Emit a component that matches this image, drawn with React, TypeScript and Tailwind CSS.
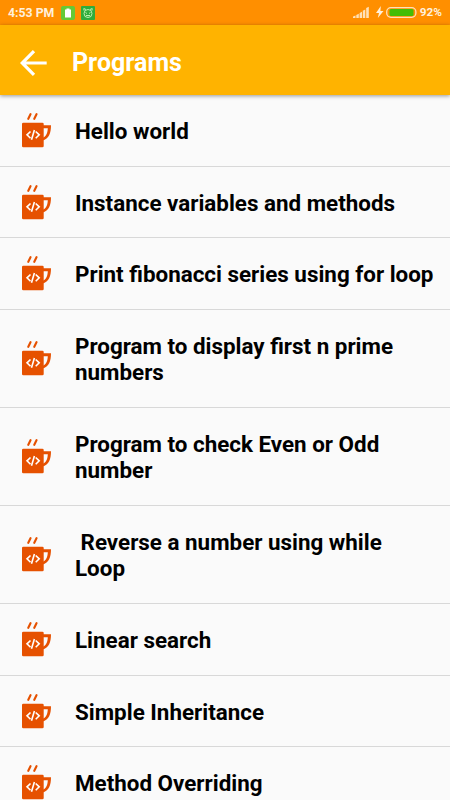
const PROGRAMS: { title: string; tall?: boolean }[] = [
  { title: "Hello world" },
  { title: "Instance variables and methods" },
  { title: "Print fibonacci series using for loop" },
  { title: "Program to display first n prime\nnumbers", tall: true },
  { title: "Program to check Even or Odd\nnumber", tall: true },
  { title: " Reverse a number using while\nLoop", tall: true },
  { title: "Linear search" },
  { title: "Simple Inheritance" },
  { title: "Method Overriding" },
];

export default function App() {
  return (
    <div className="flex h-[800px] w-[450px] flex-col overflow-hidden bg-[#fafafa] font-['Roboto',sans-serif]">
      <StatusBar />
      <header className="z-10 flex h-[70px] shrink-0 items-center bg-[#ffb300] pt-[5px] pl-5 text-white shadow-[0_1px_4px_rgba(0,0,0,0.4)]">
        <button type="button" aria-label="Back">
          <svg width="27" height="26" viewBox="0 0 27 26" fill="none" stroke="currentColor" strokeWidth="3.2">
            <path d="M26.7 13H2.5M14 1.2L2.2 13L14 24.8" />
          </svg>
        </button>
        <h1 className="ml-[25px] text-[25px] leading-none font-bold">Programs</h1>
      </header>
      <ul className="flex flex-col">
        {PROGRAMS.map((p) => (
          <Row key={p.title} title={p.title} tall={p.tall} />
        ))}
      </ul>
    </div>
  );
}

function StatusBar() {
  return (
    <div className="flex h-[25px] shrink-0 items-center bg-[#ff8f00] pr-[8px] pl-[8px] text-[12px] leading-none font-medium text-[#fff0dc]">
      <span className="w-[53px] pt-px text-[12.3px] font-bold whitespace-nowrap">4:53 PM</span>
      <svg width="14" height="14" viewBox="0 0 14 14" className="shrink-0">
        <rect width="14" height="14" rx="2" fill="#65c936" />
        <path d="M4 3.5h1.5V2.5h3v1H10v8H4z" fill="#fff" />
      </svg>
      <svg width="14" height="14" viewBox="0 0 14 14" className="ml-[6px] shrink-0">
        <rect width="14" height="14" rx="1" fill="#2fac3b" />
        <g fill="none" stroke="#b9efad" strokeWidth="1">
          <circle cx="7" cy="7.5" r="4" />
          <path d="M3 4.5L2.8 2.5L5 3.5M11 4.5L11.2 2.5L9 3.5M4.5 6.5L6 7.5M9.5 6.5L8 7.5M5 9.5h4" />
        </g>
      </svg>
      <div className="ml-auto flex items-center">
        <svg width="17" height="12" viewBox="0 0 17 12" fill="#ffe1b8">
          <path d="M0 12V10.5L2.5 9.5V12zM3.3 12V9L5.8 7.8V12zM6.6 12V7L9 5.8V12zM9.8 12V4.8L12.3 3.5V12zM13.2 12V2L15.8 .7V12z" />
        </svg>
        <svg width="8" height="12" viewBox="0 0 8 12" className="ml-[6px]" fill="#fff0dc">
          <path d="M4.8 0L0 7h3L1.8 12L7.5 5H4.4z" />
        </svg>
        <svg width="31" height="11" viewBox="0 0 31 11" className="ml-[2px]">
          <rect x=".7" y=".7" width="29.2" height="9.6" rx="4.2" fill="none" stroke="#ffe1b8" strokeWidth="1.3" />
          <rect x="3.5" y="2" width="24" height="7" rx="1.5" fill="#43bd05" />
        </svg>
        <span className="ml-[3px] pt-px text-[11.8px] font-bold">92%</span>
      </div>
    </div>
  );
}

function Row({ title, tall }: { title: string; tall?: boolean }) {
  return (
    <li
      className={`flex shrink-0 items-center border-b border-[#d8d8d8] pl-[22px] ${
        tall ? "h-[98px]" : "h-[71.7px]"
      }`}
    >
      <CoffeeIcon />
      <span className="ml-[23px] pt-px text-[22.4px] leading-[26px] font-bold whitespace-pre text-black">
        {title}
      </span>
    </li>
  );
}

function CoffeeIcon() {
  return (
    <svg width="30" height="35" viewBox="0 0 30 35" fill="none" className="shrink-0">
      <path d="M6.3 5.8L8.5 1.2M12.3 5.8L14.5 1.2" stroke="#e65100" strokeWidth="2.1" strokeLinecap="round" />
      <path d="M20.5 29.5V27.5C27 26 29 20 29 12.2H20.5V15.2H25.8C25.6 19.8 24.3 23.4 20.5 24.9z" fill="#e65100" />
      <rect y="9.7" width="21.7" height="24.6" rx="1.3" fill="#e65100" />
      <path
        d="M8.5 18.5L5 21.8L8.5 25.2M13.7 18.5L17.2 21.8L13.7 25.2M12.4 17L9.5 26.7"
        stroke="#fff"
        strokeWidth="1.6"
      />
    </svg>
  );
}
